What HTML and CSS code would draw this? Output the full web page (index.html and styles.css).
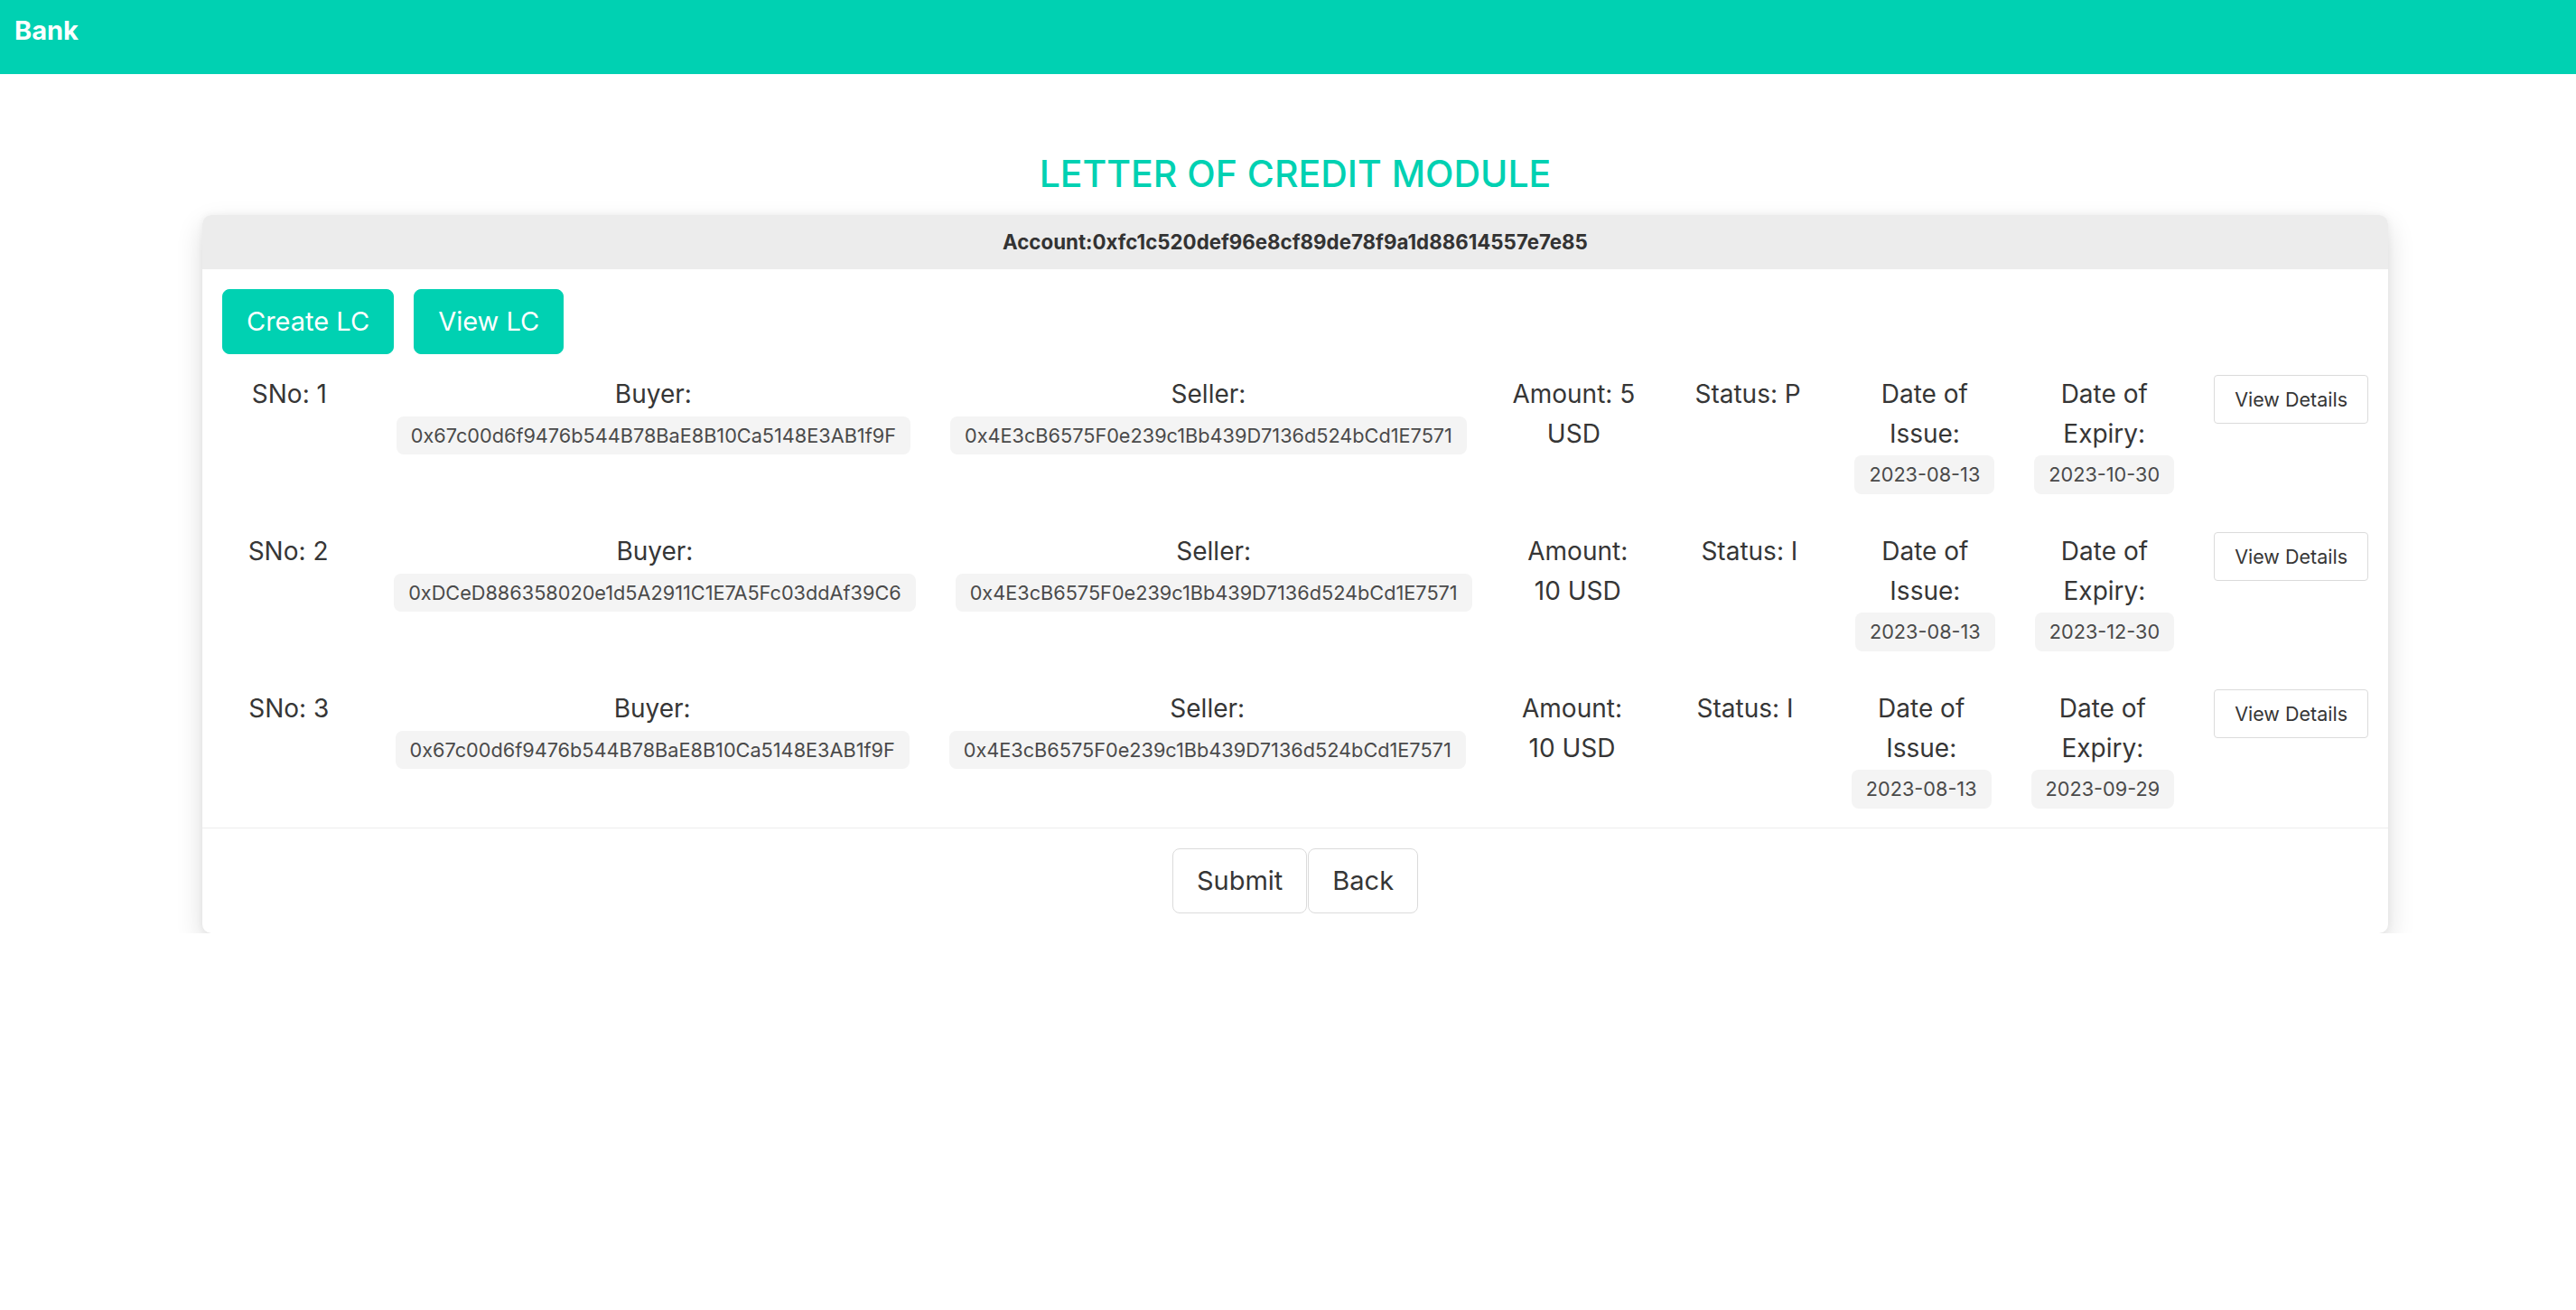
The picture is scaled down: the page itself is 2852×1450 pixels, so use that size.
FILE: index.html
```html
<!DOCTYPE html>
<html lang="en">
<head>
<meta charset="utf-8">
<title>Bank</title>
<link rel="stylesheet" href="styles.css">
</head>
<body>
<nav class="navbar"><span class="brand">Bank</span></nav>
<main class="page">
  <h2 class="title">LETTER OF CREDIT MODULE</h2>
  <div class="card">
    <div class="card-header">Account:0xfc1c520def96e8cf89de78f9a1d88614557e7e85</div>
    <div class="card-body">
      <div class="actions">
        <button class="btn btn-primary">Create LC</button>
        <button class="btn btn-primary">View LC</button>
      </div>
      <div class="lc-list">
        <div class="lc-row">
          <div class="col">SNo: 1</div>
          <div class="col"><span>Buyer:</span><span class="chip">0x67c00d6f9476b544B78BaE8B10Ca5148E3AB1f9F</span></div>
          <div class="col"><span>Seller:</span><span class="chip">0x4E3cB6575F0e239c1Bb439D7136d524bCd1E7571</span></div>
          <div class="col">Amount: 5 USD</div>
          <div class="col">Status: P</div>
          <div class="col"><span>Date of Issue:</span><span class="chip">2023-08-13</span></div>
          <div class="col"><span>Date of Expiry:</span><span class="chip">2023-10-30</span></div>
          <div class="col"><button class="btn-details">View Details</button></div>
        </div>
        <div class="lc-row">
          <div class="col">SNo: 2</div>
          <div class="col"><span>Buyer:</span><span class="chip">0xDCeD886358020e1d5A2911C1E7A5Fc03ddAf39C6</span></div>
          <div class="col"><span>Seller:</span><span class="chip">0x4E3cB6575F0e239c1Bb439D7136d524bCd1E7571</span></div>
          <div class="col">Amount: 10 USD</div>
          <div class="col">Status: I</div>
          <div class="col"><span>Date of Issue:</span><span class="chip">2023-08-13</span></div>
          <div class="col"><span>Date of Expiry:</span><span class="chip">2023-12-30</span></div>
          <div class="col"><button class="btn-details">View Details</button></div>
        </div>
        <div class="lc-row">
          <div class="col">SNo: 3</div>
          <div class="col"><span>Buyer:</span><span class="chip">0x67c00d6f9476b544B78BaE8B10Ca5148E3AB1f9F</span></div>
          <div class="col"><span>Seller:</span><span class="chip">0x4E3cB6575F0e239c1Bb439D7136d524bCd1E7571</span></div>
          <div class="col">Amount: 10 USD</div>
          <div class="col">Status: I</div>
          <div class="col"><span>Date of Issue:</span><span class="chip">2023-08-13</span></div>
          <div class="col"><span>Date of Expiry:</span><span class="chip">2023-09-29</span></div>
          <div class="col"><button class="btn-details">View Details</button></div>
        </div>
      </div>
    </div>
    <div class="card-footer">
      <button class="btn btn-light">Submit</button>
      <button class="btn btn-light">Back</button>
    </div>
  </div>
</main>
</body>
</html>
```
FILE: styles.css
```css
* { box-sizing: border-box; }

body {
  margin: 0;
  font-family: Inter, "Noto Sans", "Liberation Sans", sans-serif;
  color: #363636;
  background: #fff;
}

.navbar {
  height: 82px;
  background: #00d1b2;
  padding: 12px 16px 0;
}

.brand {
  font-weight: 700;
  font-size: 29px;
  line-height: 44px;
  color: #fff;
}

.page {
  margin: 0 208px 0 224px;
  padding-top: 85px;
}

.title {
  margin: 0 0 21px;
  text-align: center;
  color: #00d1b2;
  font-weight: 500;
  font-size: 41px;
  line-height: 50px;
}

.card {
  background: #fff;
  border-radius: 10px;
  overflow: hidden;
  box-shadow: 0 12px 30px rgba(0, 0, 0, 0.14), 0 0 8px rgba(0, 0, 0, 0.05);
}

.card-header {
  background: #ececec;
  text-align: center;
  font-weight: 700;
  font-size: 22.3px;
  line-height: 32px;
  padding: 14px;
  color: #333;
}

.card-body {
  padding: 22px 22px 21px;
}

.actions {
  display: flex;
  gap: 22px;
}

.btn {
  font-family: inherit;
  font-size: 29px;
  line-height: 44px;
  padding: 13px 26px;
  border-radius: 8px;
  border: 1px solid transparent;
  cursor: pointer;
}

.btn-primary {
  background: #00d1b2;
  border-color: #00d1b2;
  color: #fff;
}

.btn-light {
  background: #fff;
  border-color: #dbdbdb;
  color: #363636;
}

.lc-list {
  display: flex;
  flex-direction: column;
  gap: 42px;
  margin-top: 23px;
}

.lc-row {
  display: flex;
  margin: 0 -22px;
}

.col {
  flex: 1 0 0%;
  padding: 0 22px;
  display: flex;
  flex-direction: column;
  align-items: center;
  text-align: center;
  font-size: 28px;
  line-height: 43.7px;
  color: #363636;
}

.chip {
  display: block;
  margin-top: 2px;
  padding: 4px 16px;
  background: #f4f4f4;
  border-radius: 8px;
  font-size: 21.7px;
  line-height: 34.5px;
  white-space: nowrap;
  color: #4a4a4a;
}

.btn-details {
  font-family: inherit;
  font-size: 21.5px;
  line-height: 32px;
  padding: 10px 22px;
  border: 1px solid #dbdbdb;
  border-radius: 4px;
  background: #fff;
  color: #363636;
  white-space: nowrap;
}

.card-footer {
  border-top: 1px solid #ededed;
  padding: 22px;
  display: flex;
  justify-content: center;
  gap: 1px;
}
```
